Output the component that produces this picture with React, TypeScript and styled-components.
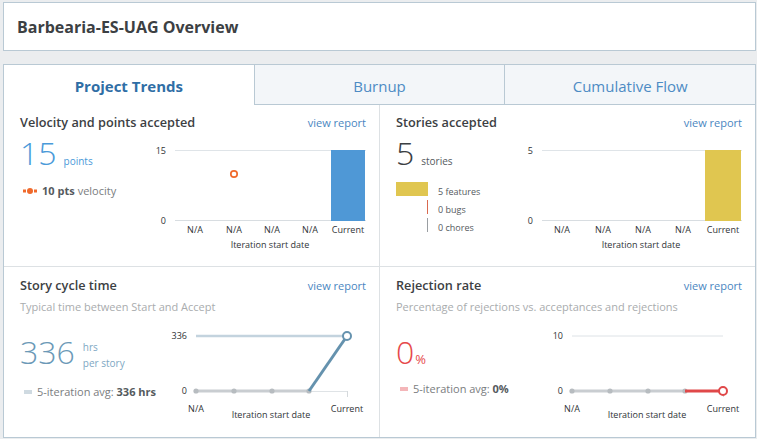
import React from "react";
import styled, { createGlobalStyle } from "styled-components";

const GlobalStyle = createGlobalStyle`
  html, body { margin: 0; padding: 0; }
  body {
    background: #ebedef;
    font-family: "Open Sans", "Liberation Sans", sans-serif;
    color: #3c4043;
  }
`;

const Page = styled.div`
  padding: 2px 1px 2px 3px;
`;

const Header = styled.header`
  box-sizing: border-box;
  height: 49px;
  background: #fff;
  border: 1px solid #b9c9d4;
  display: flex;
  align-items: center;
  padding-left: 13px;
`;

const Title = styled.h1`
  margin: 0;
  font-size: 16px;
  font-weight: 700;
  color: #3c4043;
`;

const Panel = styled.main`
  margin-top: 13px;
  background: #fff;
  border: 1px solid #b9c9d4;
`;

const Tabs = styled.nav`
  display: flex;
  height: 40px;
`;

const Tab = styled.div<{ $active?: boolean }>`
  flex: 1;
  box-sizing: border-box;
  display: flex;
  align-items: center;
  justify-content: center;
  padding-top: 2px;
  font-size: 15px;
  font-weight: ${(p) => (p.$active ? 700 : 400)};
  color: ${(p) => (p.$active ? "#2f6ea5" : "#4d8bc4")};
  background: ${(p) => (p.$active ? "#fff" : "#f3f6f9")};
  border-bottom: 1px solid ${(p) => (p.$active ? "#fff" : "#b9c9d4")};
  & + & {
    border-left: 1px solid #b9c9d4;
  }
`;

const Grid = styled.div`
  display: grid;
  grid-template-columns: 376px 1fr;
  grid-template-rows: 162px 170px;
`;

const Cell = styled.section<{ $col: number; $row: number }>`
  box-sizing: border-box;
  min-width: 0;
  padding: ${(p) => (p.$row === 0 ? 8 : 9)}px 13px 0 16px;
  border-right: ${(p) => (p.$col === 0 ? "1px solid #dde1e4" : "none")};
  border-bottom: ${(p) => (p.$row === 0 ? "1px solid #dde1e4" : "none")};
`;

const CellHead = styled.div`
  display: flex;
  justify-content: space-between;
  align-items: baseline;
  height: 18px;
  line-height: 18px;
`;

const CellTitle = styled.h2`
  margin: 0;
  font-size: 12.7px;
  font-weight: 600;
  color: #3c4043;
`;

const ViewReport = styled.a`
  font-size: 11px;
  color: #4a86bf;
  text-decoration: none;
  cursor: pointer;
`;

const Subtitle = styled.p`
  margin: 5px 0 0;
  font-size: 11px;
  line-height: 16px;
  color: #a9acae;
`;

const Body = styled.div`
  display: grid;
  grid-template-columns: 130px 216px;
`;

const Summary = styled.div<{ $pt: number }>`
  padding-top: ${(p) => p.$pt}px;
  white-space: nowrap;
`;

const BigRow = styled.div<{ $align?: string }>`
  display: flex;
  align-items: ${(p) => p.$align || "baseline"};
`;

const BigNumber = styled.span<{ $color: string }>`
  font-size: 32px;
  font-weight: 300;
  line-height: 32px;
  color: ${(p) => p.$color};
`;

const Unit = styled.span<{ $color: string; $size?: number; $ml?: number }>`
  font-size: ${(p) => p.$size || 10}px;
  color: ${(p) => p.$color};
  margin-left: ${(p) => (p.$ml === undefined ? 7 : p.$ml)}px;
`;

const UnitStack = styled.div<{ $color: string }>`
  display: flex;
  flex-direction: column;
  margin: 3px 0 0 8px;
  font-size: 10px;
  line-height: 16px;
  color: ${(p) => p.$color};
`;

const InfoLine = styled.div<{ $mt: number }>`
  display: flex;
  align-items: center;
  margin-top: ${(p) => p.$mt}px;
  font-size: 11px;
  line-height: 16px;
  color: #7a7d80;
`;

const Strong = styled.b`
  font-weight: 700;
  color: #555a5e;
  margin-right: 3px;
`;

const VelocityIcon = styled.svg`
  display: block;
  flex-shrink: 0;
  margin: 0 5px 0 3px;
`;

const Dash = styled.span<{ $color: string }>`
  display: block;
  flex-shrink: 0;
  width: 8px;
  height: 4px;
  margin: 0 5px 0 4px;
  background: ${(p) => p.$color};
`;

const Legend = styled.div`
  margin-top: 13px;
`;

const LegendRow = styled.div`
  display: flex;
  height: 18px;
`;

const Marker = styled.span<{ $fill?: string; $line?: string }>`
  box-sizing: border-box;
  flex-shrink: 0;
  width: 32px;
  height: 14px;
  background: ${(p) => p.$fill || "transparent"};
  border-right: ${(p) => (p.$line ? `1px solid ${p.$line}` : "none")};
`;

const LegendText = styled.span`
  margin: 3px 0 0 10px;
  font-size: 9px;
  line-height: 14px;
  color: #555a5e;
`;

const ChartSvg = styled.svg<{ $mt: number }>`
  display: block;
  margin-top: ${(p) => p.$mt}px;
  overflow: visible;
  font-family: "Open Sans", "Liberation Sans", sans-serif;
`;

const AxisText = styled.text`
  font-size: 9px;
  fill: #2f3336;
`;

type BarChartProps = {
  topLabel: string;
  labelRight: number;
  gridStart: number;
  barX: number;
  barColor: string;
  xs: number[];
  titleX: number;
  dot?: { x: number; y: number };
};

const BarChart = ({ topLabel, labelRight, gridStart, barX, barColor, xs, titleX, dot }: BarChartProps) => {
  const labels = ["N/A", "N/A", "N/A", "N/A", "Current"];
  return (
    <ChartSvg $mt={4} width={216} height={116}>
      <AxisText x={labelRight} y={19} textAnchor="end">{topLabel}</AxisText>
      <AxisText x={labelRight} y={88.5} textAnchor="end">0</AxisText>
      <line x1={gridStart} x2={216} y1={15.5} y2={15.5} stroke="#dfe4e8" strokeWidth={1} />
      <line x1={gridStart} x2={216} y1={85.5} y2={85.5} stroke="#d8dde1" strokeWidth={1} />
      <rect x={barX} y={15} width={216 - barX - 1} height={71} fill={barColor} />
      {dot && <circle cx={dot.x} cy={dot.y} r={3.2} fill="#fff" stroke="#f06a2c" strokeWidth={1.7} />}
      {labels.map((l, i) => (
        <AxisText key={i} x={xs[i]} y={98} textAnchor="middle">{l}</AxisText>
      ))}
      <AxisText x={titleX} y={113} textAnchor="middle">Iteration start date</AxisText>
    </ChartSvg>
  );
};

type LineChartProps = {
  topLabel: string;
  topLine: "series" | "grid";
  accent: string;
  rise: boolean;
};

const LineChart = ({ topLabel, topLine, accent, rise }: LineChartProps) => {
  const dots = [46, 84, 122, 159];
  return (
    <ChartSvg $mt={10} width={216} height={100}>
      <AxisText x={37} y={14.2} textAnchor="end">{topLabel}</AxisText>
      <AxisText x={37} y={69.2} textAnchor="end">0</AxisText>
      {topLine === "series" ? (
        <line x1={46} x2={197} y1={11} y2={11} stroke="#c3d3de" strokeWidth={2.5} />
      ) : (
        <line x1={46} x2={197} y1={11} y2={11} stroke="#dde2e6" strokeWidth={1} />
      )}
      <line x1={159} x2={197} y1={66.5} y2={66.5} stroke="#dfe3e6" strokeWidth={1} />
      <line x1={197.5} x2={197.5} y1={66} y2={72} stroke="#d5d9dc" strokeWidth={1} />
      <line x1={46} x2={159} y1={66} y2={66} stroke="#c9cdd1" strokeWidth={3} />
      {dots.map((x) => (
        <circle key={x} cx={x} cy={66} r={2.6} fill="#b7bcc0" />
      ))}
      {rise ? (
        <line x1={159} y1={66} x2={197} y2={11} stroke={accent} strokeWidth={3} />
      ) : (
        <line x1={159} y1={66} x2={197} y2={66} stroke={accent} strokeWidth={3} />
      )}
      <circle cx={197} cy={rise ? 11 : 66} r={4} fill="#fff" stroke={accent} strokeWidth={2} />
      <AxisText x={46} y={87} textAnchor="middle">N/A</AxisText>
      <AxisText x={121} y={93} textAnchor="middle">Iteration start date</AxisText>
      <AxisText x={197} y={87} textAnchor="middle">Current</AxisText>
    </ChartSvg>
  );
};

export default function App() {
  return (
    <>
      <GlobalStyle />
      <Page>
        <Header>
          <Title>Barbearia-ES-UAG Overview</Title>
        </Header>
        <Panel>
          <Tabs>
            <Tab $active>Project Trends</Tab>
            <Tab>Burnup</Tab>
            <Tab>Cumulative Flow</Tab>
          </Tabs>
          <Grid>
            <Cell $col={0} $row={0}>
              <CellHead>
                <CellTitle>Velocity and points accepted</CellTitle>
                <ViewReport>view report</ViewReport>
              </CellHead>
              <Body>
                <Summary $pt={6}>
                  <BigRow>
                    <BigNumber $color="#4a9ad9">15</BigNumber>
                    <Unit $color="#4a9ad9">points</Unit>
                  </BigRow>
                  <InfoLine $mt={14}>
                    <VelocityIcon width={14} height={6} viewBox="0 0 14 6">
                      <rect x={0} y={1.5} width={3} height={3} fill="#f06a2c" />
                      <circle cx={7} cy={3} r={3} fill="#f06a2c" />
                      <rect x={11} y={1.5} width={3} height={3} fill="#f06a2c" />
                    </VelocityIcon>
                    <Strong>10 pts</Strong>velocity
                  </InfoLine>
                </Summary>
                <BarChart
                  topLabel="15"
                  labelRight={16}
                  gridStart={25}
                  barX={181}
                  barColor="#4f98d6"
                  xs={[45, 84, 122, 160, 198]}
                  titleX={120}
                  dot={{ x: 84, y: 39 }}
                />
              </Body>
            </Cell>
            <Cell $col={1} $row={0}>
              <CellHead>
                <CellTitle>Stories accepted</CellTitle>
                <ViewReport>view report</ViewReport>
              </CellHead>
              <Body>
                <Summary $pt={6}>
                  <BigRow>
                    <BigNumber $color="#3c4043">5</BigNumber>
                    <Unit $color="#555a5e">stories</Unit>
                  </BigRow>
                  <Legend>
                    <LegendRow>
                      <Marker $fill="#e0c650" />
                      <LegendText>5 features</LegendText>
                    </LegendRow>
                    <LegendRow>
                      <Marker $line="#d9694f" />
                      <LegendText>0 bugs</LegendText>
                    </LegendRow>
                    <LegendRow>
                      <Marker $line="#9a9ea2" />
                      <LegendText>0 chores</LegendText>
                    </LegendRow>
                  </Legend>
                </Summary>
                <BarChart
                  topLabel="5"
                  labelRight={7}
                  gridStart={16}
                  barX={179}
                  barColor="#e0c650"
                  xs={[36, 77, 117, 157, 197]}
                  titleX={115}
                />
              </Body>
            </Cell>
            <Cell $col={0} $row={1}>
              <CellHead>
                <CellTitle>Story cycle time</CellTitle>
                <ViewReport>view report</ViewReport>
              </CellHead>
              <Subtitle>Typical time between Start and Accept</Subtitle>
              <Body>
                <Summary $pt={21}>
                  <BigRow $align="flex-start">
                    <BigNumber $color="#6b99b7">336</BigNumber>
                    <UnitStack $color="#7ea7c3">
                      <span>hrs</span>
                      <span>per story</span>
                    </UnitStack>
                  </BigRow>
                  <InfoLine $mt={13}>
                    <Dash $color="#cfdae1" />
                    5-iteration avg:&nbsp;<Strong>336 hrs</Strong>
                  </InfoLine>
                </Summary>
                <LineChart topLabel="336" topLine="series" accent="#6592ae" rise />
              </Body>
            </Cell>
            <Cell $col={1} $row={1}>
              <CellHead>
                <CellTitle>Rejection rate</CellTitle>
                <ViewReport>view report</ViewReport>
              </CellHead>
              <Subtitle>Percentage of rejections vs. acceptances and rejections</Subtitle>
              <Body>
                <Summary $pt={21}>
                  <BigRow>
                    <BigNumber $color="#e6494b">0</BigNumber>
                    <Unit $color="#e6494b" $size={13} $ml={1}>%</Unit>
                  </BigRow>
                  <InfoLine $mt={13}>
                    <Dash $color="#f4b6b9" />
                    5-iteration avg:&nbsp;<Strong>0%</Strong>
                  </InfoLine>
                </Summary>
                <LineChart topLabel="10" topLine="grid" accent="#e04849" rise={false} />
              </Body>
            </Cell>
          </Grid>
        </Panel>
      </Page>
    </>
  );
}
